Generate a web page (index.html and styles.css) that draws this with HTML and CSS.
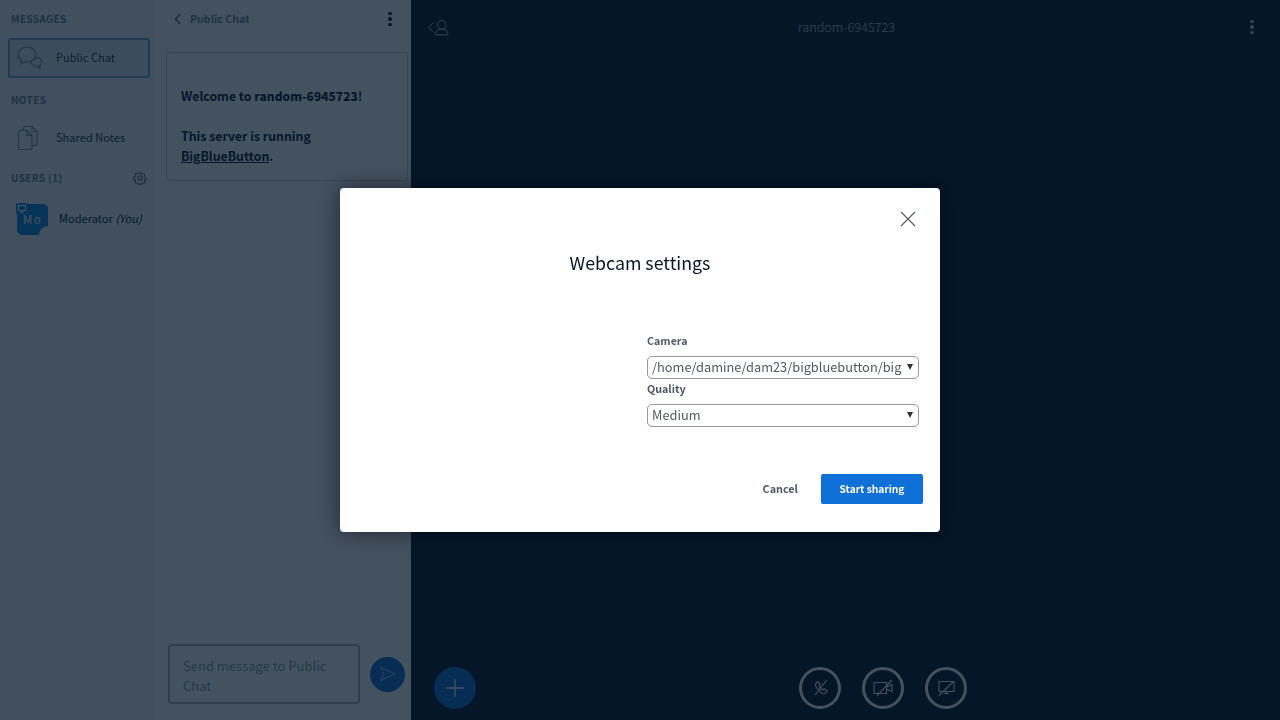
FILE: index.html
```html
<!DOCTYPE html>
<html lang="en">

<head>
  <meta charset="UTF-8">
  <title>random-6945723</title>
  <link rel="stylesheet" href="styles.css">
</head>

<body>

  <div class="app">
    <nav class="userlist">
      <h2 class="section-title">Messages</h2>
      <div class="list-item active">
        <svg class="item-icon" viewBox="0 0 26 26" fill="none" stroke="currentColor" stroke-width="1.200">
          <path d="M10 2c5 0 9 3.300 9 7.500s-4 7.500-9 7.500c-1 0-2-.1-2.900-.4L4 19l.4-3.800C2.200 13.800 1 11.800 1 9.500 1 5.300 5 2 10 2z"/>
          <path d="M19 12.800c3.300 0 6 1.900 6 4.200 0 1.400-1 2.600-2.400 3.400l.4 3.100-3-2.300c-3.300.2-6-1.700-6-4.200"/>
        </svg>
        <span>Public Chat</span>
      </div>

      <h2 class="section-title notes-title">Notes</h2>
      <div class="list-item">
        <svg class="item-icon" viewBox="0 0 26 26" fill="none" stroke="currentColor" stroke-width="1.200">
          <path d="M1.500 7A1.500 1.500 0 0 1 3 5.500h7l5 5V23a1.500 1.500 0 0 1-1.500 1.500H3A1.500 1.500 0 0 1 1.500 23z"/>
          <path d="M10 5.500v5h5"/>
          <path d="M6.500 5V3A1.500 1.500 0 0 1 8 1.500h7l5 5V19a1.500 1.500 0 0 1-1.500 1.500h-3"/>
          <path d="M15 1.500v5h5"/>
        </svg>
        <span>Shared Notes</span>
      </div>

      <div class="users-head">
        <h2 class="section-title">Users (1)</h2>
        <svg class="gear" viewBox="0 0 16 16" fill="none" stroke="currentColor" stroke-width="1.100">
          <circle cx="8" cy="8" r="2.500"/>
          <path d="M6.800 1h2.400l.4 2 1.400.6 1.700-1.100 1.700 1.700-1.100 1.700.6 1.400 2 .4v2.400l-2 .4-.6 1.400 1.100 1.700-1.700 1.700-1.700-1.100-1.400.6-.4 2H6.800l-.4-2-1.400-.6-1.700 1.100-1.700-1.700 1.100-1.700-.6-1.400-2-.4V6.800l2-.4.6-1.400-1.100-1.700 1.700-1.700 1.700 1.100 1.400-.6z" transform="translate(.8 .8) scale(.9)"/>
        </svg>
      </div>
      <div class="user-row">
        <div class="avatar">
          <span>Mo</span>
          <div class="presenter-badge">
            <svg viewBox="0 0 10 10" fill="none" stroke="currentColor" stroke-width="1.200">
              <path d="M1.500 1.500h7v5h-7zM3.500 8.500h3M5 6.500v2"/>
            </svg>
          </div>
        </div>
        <span class="user-name">Moderator <i>(You)</i></span>
      </div>
    </nav>

    <section class="chat">
      <header class="chat-head">
        <svg class="chat-back" viewBox="0 0 8 12" fill="none" stroke="currentColor" stroke-width="1.300">
          <path d="M6 1 1.500 6 6 11"/>
        </svg>
        <span class="chat-title">Public Chat</span>
        <div class="dots dark"><i></i><i></i><i></i></div>
      </header>

      <div class="welcome">
        <p>Welcome to <b>random-6945723</b>!</p>
        <p>This server is running <a href="#">BigBlueButton</a>.</p>
      </div>

      <div class="chat-form">
        <div class="chat-input">Send message to Public Chat</div>
        <button class="send-btn">
          <svg viewBox="0 0 18 16" fill="none" stroke="currentColor" stroke-width="1">
            <path d="M1.500 1.500 16.500 8 1.500 14.500 5 8z"/>
          </svg>
        </button>
      </div>
    </section>

    <main class="main">
      <header class="main-head">
        <svg class="back-user" viewBox="0 0 21 18" fill="none" stroke="currentColor" stroke-width="1">
          <path d="M5 5 .8 9.500 5 14"/>
          <circle cx="13.700" cy="6.800" r="4.300"/>
          <path d="M7.500 16.800v-1.500c0-2.300 2.200-3.500 4-4h4.400c1.800.5 4 1.700 4 4v1.500z"/>
        </svg>
        <span class="meeting-title">random-6945723</span>
        <div class="dots"><i></i><i></i><i></i></div>
      </header>

      <footer class="main-foot">
        <button class="plus-btn">
          <svg viewBox="0 0 20 20" fill="none" stroke="currentColor" stroke-width="1.300">
            <path d="M10 1v18M1 10h18"/>
          </svg>
        </button>
        <div class="media-btns">
          <button class="media-btn">
            <svg viewBox="0 0 20 20" fill="none" stroke="currentColor" stroke-width="1.100">
              <path d="M6 5.500 8 3.500l2.200 3.200L9 8.200c.8 1.800 2 3 3.600 3.800l1.500-1.200 3 2.300-1.800 2c-1 .9-2.500.8-4-.2C9 13 7 10.800 5.800 8.500c-.6-1.200-.7-2.200.2-3z"/>
              <path d="M16.700 2 5 17"/>
            </svg>
          </button>
          <button class="media-btn">
            <svg viewBox="0 0 20 20" fill="none" stroke="currentColor" stroke-width="1.100">
              <path d="M1 4.500h12.500v11H1zM13.500 9l5.500-2.500v7L13.500 11"/>
              <path d="M4 17.500 19 2"/>
            </svg>
          </button>
          <button class="media-btn">
            <svg viewBox="0 0 20 20" fill="none" stroke="currentColor" stroke-width="1.100">
              <path d="M3 3.500h15v10H3zM8 15.500h5M10.500 13.500v2"/>
              <path d="M3 17.500 18 3"/>
            </svg>
          </button>
        </div>
      </footer>
    </main>
  </div>

  <div class="overlay">
    <div class="modal">
      <button class="modal-close">
        <svg viewBox="0 0 16 16" fill="none" stroke="currentColor" stroke-width="1.100">
          <path d="M1 1l14 14M15 1 1 15"/>
        </svg>
      </button>
      <h1 class="modal-title">Webcam settings</h1>
      <div class="modal-body">
        <div class="preview"></div>
        <div class="options">
          <label class="field-label">Camera</label>
          <div class="select-wrap">
            <select class="field-select">
              <option>/home/damine/dam23/bigbluebutton/bigbluebutton-html5/video.y4m</option>
            </select>
          </div>
          <label class="field-label">Quality</label>
          <div class="select-wrap">
            <select class="field-select">
              <option>Medium</option>
            </select>
          </div>
        </div>
      </div>
      <div class="modal-actions">
        <button class="btn-cancel">Cancel</button>
        <button class="btn-start">Start sharing</button>
      </div>
    </div>
  </div>

</body>

</html>
```

FILE: styles.css
```css
* {
  box-sizing: border-box;
}

body {
  margin: 0;
  height: 720px;
  overflow: hidden;
  font-family: "Noto Sans CJK SC", "Noto Sans", sans-serif;
  color: #06172a;
  background-color: #06172a;
}

button {
  padding: 0;
  border: none;
  background: none;
  font-family: inherit;
  cursor: pointer;
}

.app {
  display: flex;
  height: 720px;
}

/* left column */
.userlist {
  width: 155px;
  padding-top: 10px;
  background-color: #f3f6f9;
}

.section-title {
  margin: 0;
  padding-left: 11px;
  font-size: 10.100px;
  line-height: 18px;
  font-weight: 700;
  letter-spacing: 0.3px;
  text-transform: uppercase;
  color: #6f7f8e;
}

.notes-title {
  margin-top: 13px;
}

.list-item {
  display: flex;
  align-items: center;
  gap: 13px;
  height: 40px;
  margin: 10px 5px 0 8px;
  padding-left: 9px;
  font-size: 11.100px;
  color: #2a3744;
}

.list-item span {
  padding-bottom: 2px;
}

.list-item.active {
  background-color: #e4ecf4;
  border: 2px solid #7aa5d8;
  border-radius: 3px;
  padding-left: 7px;
}

.notes-title + .list-item {
  margin-top: 9px;
}

.item-icon {
  width: 26px;
  height: 26px;
  color: #7d8d9c;
}

.users-head {
  display: flex;
  align-items: center;
  justify-content: space-between;
  margin-top: 11px;
  padding-right: 8px;
}

.gear {
  width: 14px;
  height: 14px;
  color: #2a3744;
}

.user-row {
  display: flex;
  align-items: center;
  gap: 11px;
  margin-top: 17px;
  padding-left: 17px;
}

.avatar {
  position: relative;
  display: flex;
  align-items: center;
  justify-content: center;
  width: 31px;
  height: 31px;
  border-radius: 5px;
  font-size: 11.500px;
  letter-spacing: 1.400px;
  color: #fff;
  background-color: #0a8ae6;
}

.avatar span {
  padding-bottom: 2px;
}

/* the round bite out of the lower right corner */
.avatar::after {
  content: "";
  position: absolute;
  right: -9px;
  bottom: -9px;
  width: 18px;
  height: 18px;
  border-radius: 50%;
  background-color: #f3f6f9;
}

.presenter-badge {
  position: absolute;
  left: -1px;
  top: -1px;
  display: flex;
  align-items: center;
  justify-content: center;
  width: 12px;
  height: 11px;
  border-radius: 2px;
  color: #fff;
  background-color: #0a8ae6;
}

.presenter-badge svg {
  width: 10px;
  height: 10px;
}

.user-name {
  padding-bottom: 3px;
  font-size: 11.100px;
  white-space: nowrap;
  color: #06172a;
}

/* chat column */
.chat {
  display: flex;
  flex-direction: column;
  width: 256px;
  padding-left: 11px;
  background-color: #fff;
}

.chat-head {
  display: flex;
  align-items: center;
  height: 38px;
  padding: 0 19px 0 8px;
}

.chat-back {
  width: 8px;
  height: 12px;
  margin-right: 8px;
  color: #4e5a66;
}

.chat-title {
  flex: 1;
  padding-bottom: 2px;
  font-size: 10.600px;
  font-weight: 700;
  color: #6f7f8e;
}

.dots {
  display: flex;
  flex-direction: column;
  align-items: center;
  gap: 2px;
  width: 4px;
}

.dots i {
  width: 3.500px;
  height: 3.500px;
  border-radius: 50%;
  background-color: #8b9aa8;
}

.dots.dark i {
  background-color: #06172a;
}

.welcome {
  width: 242px;
  height: 129px;
  margin-top: 14px;
  padding: 33px 14px 0;
  border: 1px solid #c4cdd5;
  border-radius: 4px;
  font-size: 12.300px;
  line-height: 20px;
  font-weight: 700;
}

.welcome b {
  font-size: 12px;
}

.welcome p {
  margin: 0 0 20px;
}

.welcome a {
  color: #06172a;
}

.chat-form {
  display: flex;
  align-items: center;
  gap: 10px;
  margin-top: auto;
  margin-bottom: 16px;
  padding-left: 2px;
}

.chat-input {
  width: 192px;
  height: 60px;
  padding: 10px 13px;
  border: 2px solid #a7b3bd;
  border-radius: 4px;
  font-size: 13px;
  line-height: 20px;
  color: #8b9aa8;
}

.send-btn {
  width: 35px;
  height: 35px;
  border-radius: 50%;
  color: #fff;
  background-color: #0f70d7;
}

.send-btn svg {
  display: block;
  width: 18px;
  height: 16px;
  margin: 0 auto;
  opacity: 0.6;
}

/* main area */
.main {
  display: flex;
  flex: 1;
  flex-direction: column;
  justify-content: space-between;
  background-color: #06172a;
}

.main-head {
  display: flex;
  align-items: center;
  justify-content: space-between;
  height: 54px;
  padding: 0 26px 0 17px;
  color: #fff;
}

.back-user {
  width: 21px;
  height: 18px;
  opacity: 0.75;
}

.meeting-title {
  margin-right: 6px;
  padding-bottom: 2px;
  font-size: 12.700px;
  font-weight: 300;
  opacity: 0.75;
}

.main-head .dots i {
  background-color: #fff;
  opacity: 0.75;
}

.main-foot {
  display: flex;
  height: 53px;
  padding-left: 23px;
}

.plus-btn {
  width: 42px;
  height: 42px;
  border-radius: 50%;
  color: #fff;
  background-color: #0f70d7;
}

.plus-btn svg {
  display: block;
  width: 20px;
  height: 20px;
  margin: 0 auto;
}

.media-btns {
  display: flex;
  gap: 21px;
  margin-left: 323px;
}

.media-btn {
  width: 42px;
  height: 42px;
  border: 3px solid #fff;
  border-radius: 50%;
  color: #fff;
  background-color: #06172a;
}

.media-btn svg {
  display: block;
  width: 20px;
  height: 20px;
  margin: 0 auto;
}

/* webcam modal */
.overlay {
  position: fixed;
  inset: 0;
  display: flex;
  align-items: center;
  justify-content: center;
  background-color: rgba(6, 23, 42, 0.75);
}

.modal {
  position: relative;
  width: 600px;
  height: 344px;
  padding: 61px 17px 0;
  border-radius: 4px;
  background-color: #fff;
  box-shadow: 0 0 24px rgba(0, 0, 0, 0.5);
}

.modal-close {
  position: absolute;
  top: 23px;
  right: 24px;
  width: 16px;
  height: 16px;
  color: #4e5a66;
}

.modal-close svg {
  display: block;
}

.modal-title {
  margin: 0;
  padding-bottom: 2px;
  font-size: 17.800px;
  line-height: 26px;
  font-weight: 400;
  text-align: center;
  color: #06172a;
}

.modal-body {
  display: flex;
  margin-top: 55px;
}

.preview {
  width: 290px;
}

.options {
  display: flex;
  flex-direction: column;
  width: 272px;
}

.field-label {
  font-size: 10.700px;
  line-height: 18px;
  font-weight: 700;
  color: #4e5a66;
}

.select-wrap {
  position: relative;
  margin: 6px 0 1px;
}

.select-wrap::after {
  content: "";
  position: absolute;
  top: 8px;
  right: 6px;
  border-top: 6px solid #333;
  border-left: 3px solid transparent;
  border-right: 3px solid transparent;
}

.field-select {
  display: block;
  width: 100%;
  height: 23px;
  padding: 0 16px 2px 4px;
  border: 1px solid #999;
  border-radius: 5px;
  font-family: inherit;
  font-size: 12.800px;
  color: #4e5a66;
  background-color: #fff;
  appearance: none;
}

.modal-actions {
  display: flex;
  align-items: center;
  justify-content: flex-end;
  gap: 23px;
  margin-top: 46px;
}

.btn-cancel {
  padding-bottom: 2px;
  font-size: 10.800px;
  font-weight: 700;
  color: #4e5a66;
}

.btn-start {
  width: 102px;
  height: 30px;
  padding-bottom: 2px;
  border-radius: 2px;
  font-size: 10.200px;
  font-weight: 700;
  color: #fff;
  background-color: #0f70d7;
}
```
